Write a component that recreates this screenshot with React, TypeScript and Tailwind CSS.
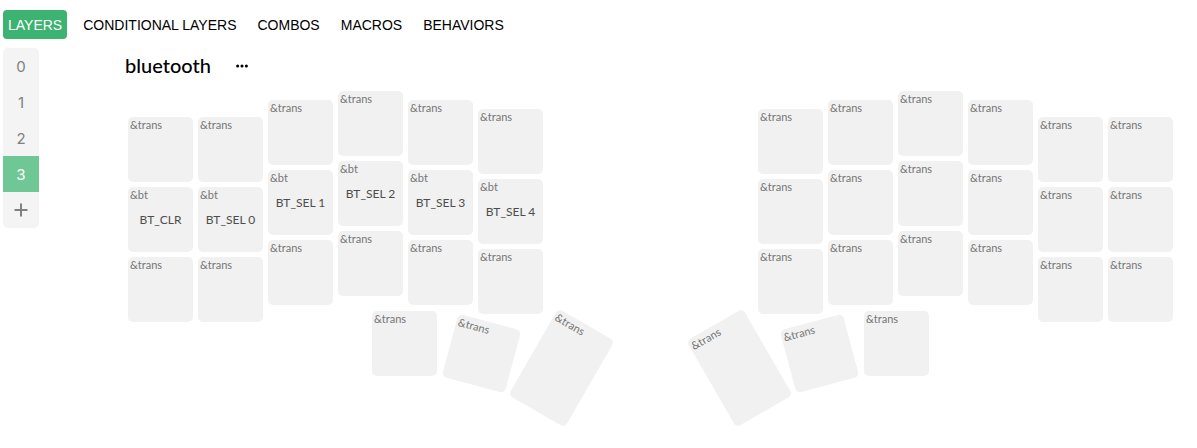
import { useState } from "react";
import { FaEllipsis } from "react-icons/fa6";

type Binding = { behavior: string; param?: string };
type Column = { offset: string; keys: Binding[] };

const trans: Binding = { behavior: "&trans" };
const bt = (param: string): Binding => ({ behavior: "&bt", param });

const tabs = ["Layers", "Conditional Layers", "Combos", "Macros", "Behaviors"];
const layers = [0, 1, 2, 3];

const leftColumns: Column[] = [
  { offset: "pt-[26px]", keys: [trans, bt("BT_CLR"), trans] },
  { offset: "pt-[26px]", keys: [trans, bt("BT_SEL 0"), trans] },
  { offset: "pt-[9px]", keys: [trans, bt("BT_SEL 1"), trans] },
  { offset: "pt-0", keys: [trans, bt("BT_SEL 2"), trans] },
  { offset: "pt-[9px]", keys: [trans, bt("BT_SEL 3"), trans] },
  { offset: "pt-[18px]", keys: [trans, bt("BT_SEL 4"), trans] },
];

const rightColumns: Column[] = [
  { offset: "pt-[18px]", keys: [trans, trans, trans] },
  { offset: "pt-[9px]", keys: [trans, trans, trans] },
  { offset: "pt-0", keys: [trans, trans, trans] },
  { offset: "pt-[9px]", keys: [trans, trans, trans] },
  { offset: "pt-[26px]", keys: [trans, trans, trans] },
  { offset: "pt-[26px]", keys: [trans, trans, trans] },
];

function Key({ binding, className = "h-[65px]" }: { binding: Binding; className?: string }) {
  return (
    <div className={`grid w-[65px] shrink-0 grid-rows-[16px_1fr_16px] rounded-[5px] bg-[#f1f1f1] ${className}`}>
      <button type="button" className="justify-self-start px-0.5 text-left text-[11px] leading-4 text-[#757575]">
        {binding.behavior}
      </button>
      {binding.param && (
        <button type="button" className="text-center text-xs whitespace-nowrap text-[#4d4d4d]">
          {binding.param}
        </button>
      )}
    </div>
  );
}

function Hand({ columns }: { columns: Column[] }) {
  return (
    <div className="flex gap-[5px]">
      {columns.map((column, i) => (
        <div key={i} className={`flex flex-col gap-[5px] ${column.offset}`}>
          {column.keys.map((binding, j) => (
            <Key key={j} binding={binding} />
          ))}
        </div>
      ))}
    </div>
  );
}

export default function App() {
  const [tab, setTab] = useState("Layers");
  const [layer, setLayer] = useState(3);

  return (
    <div className="min-h-screen bg-white pl-[3px] font-['Lato',sans-serif] text-black">
      <nav className="flex gap-[11px] pt-2.5 font-['Liberation_Sans',sans-serif]">
        {tabs.map((name) => (
          <button
            key={name}
            type="button"
            onClick={() => setTab(name)}
            className={`h-[29px] rounded px-[5px] text-sm uppercase ${
              tab === name ? "bg-[#3cb371] text-white" : ""
            }`}
          >
            {name}
          </button>
        ))}
      </nav>

      <div className="flex items-start">
        <aside className="mt-[9px] flex w-9 shrink-0 flex-col overflow-hidden rounded-[5px] bg-[#f4f4f4] font-['Inter',sans-serif] text-[#808080]">
          {layers.map((index) => (
            <button
              key={index}
              type="button"
              onClick={() => setLayer(index)}
              className={`h-9 pt-0.5 text-[15px] ${layer === index ? "bg-[#6fc795] text-white" : ""}`}
            >
              {index}
            </button>
          ))}
          <button type="button" aria-label="Add layer" className="flex h-9 items-center justify-center">
            <svg viewBox="0 0 14 14" className="size-3.5" fill="none" stroke="currentColor" strokeWidth="2">
              <path d="M7 0.5v13M0.5 7h13" />
            </svg>
          </button>
        </aside>

        <main className="min-w-0 flex-1 pl-[65px]">
          <header className="flex h-[52px] items-center gap-6 pl-[21px]">
            <h1 className="text-xl font-medium">bluetooth</h1>
            <button type="button" aria-label="Layer options" className="pt-0.5">
              <FaEllipsis className="size-3.5" />
            </button>
          </header>

          <div className="flex flex-col items-center">
            <div className="flex w-full max-w-[1045px] justify-between">
              <Hand columns={leftColumns} />
              <Hand columns={rightColumns} />
            </div>
            <div className="-mt-[11px] flex items-start justify-center gap-[113px] pb-4">
              <div className="flex items-start">
                <Key binding={trans} />
                <Key binding={trans} className="mt-2.5 ml-3 h-[65px] rotate-15" />
                <Key binding={trans} className="mt-[7px] ml-[15px] h-[100px] rotate-30" />
              </div>
              <div className="flex flex-row-reverse items-start">
                <Key binding={trans} />
                <Key binding={trans} className="mt-2.5 mr-3 h-[65px] -rotate-15" />
                <Key binding={trans} className="mt-[7px] mr-[15px] h-[100px] -rotate-30" />
              </div>
            </div>
          </div>
        </main>
      </div>
    </div>
  );
}
